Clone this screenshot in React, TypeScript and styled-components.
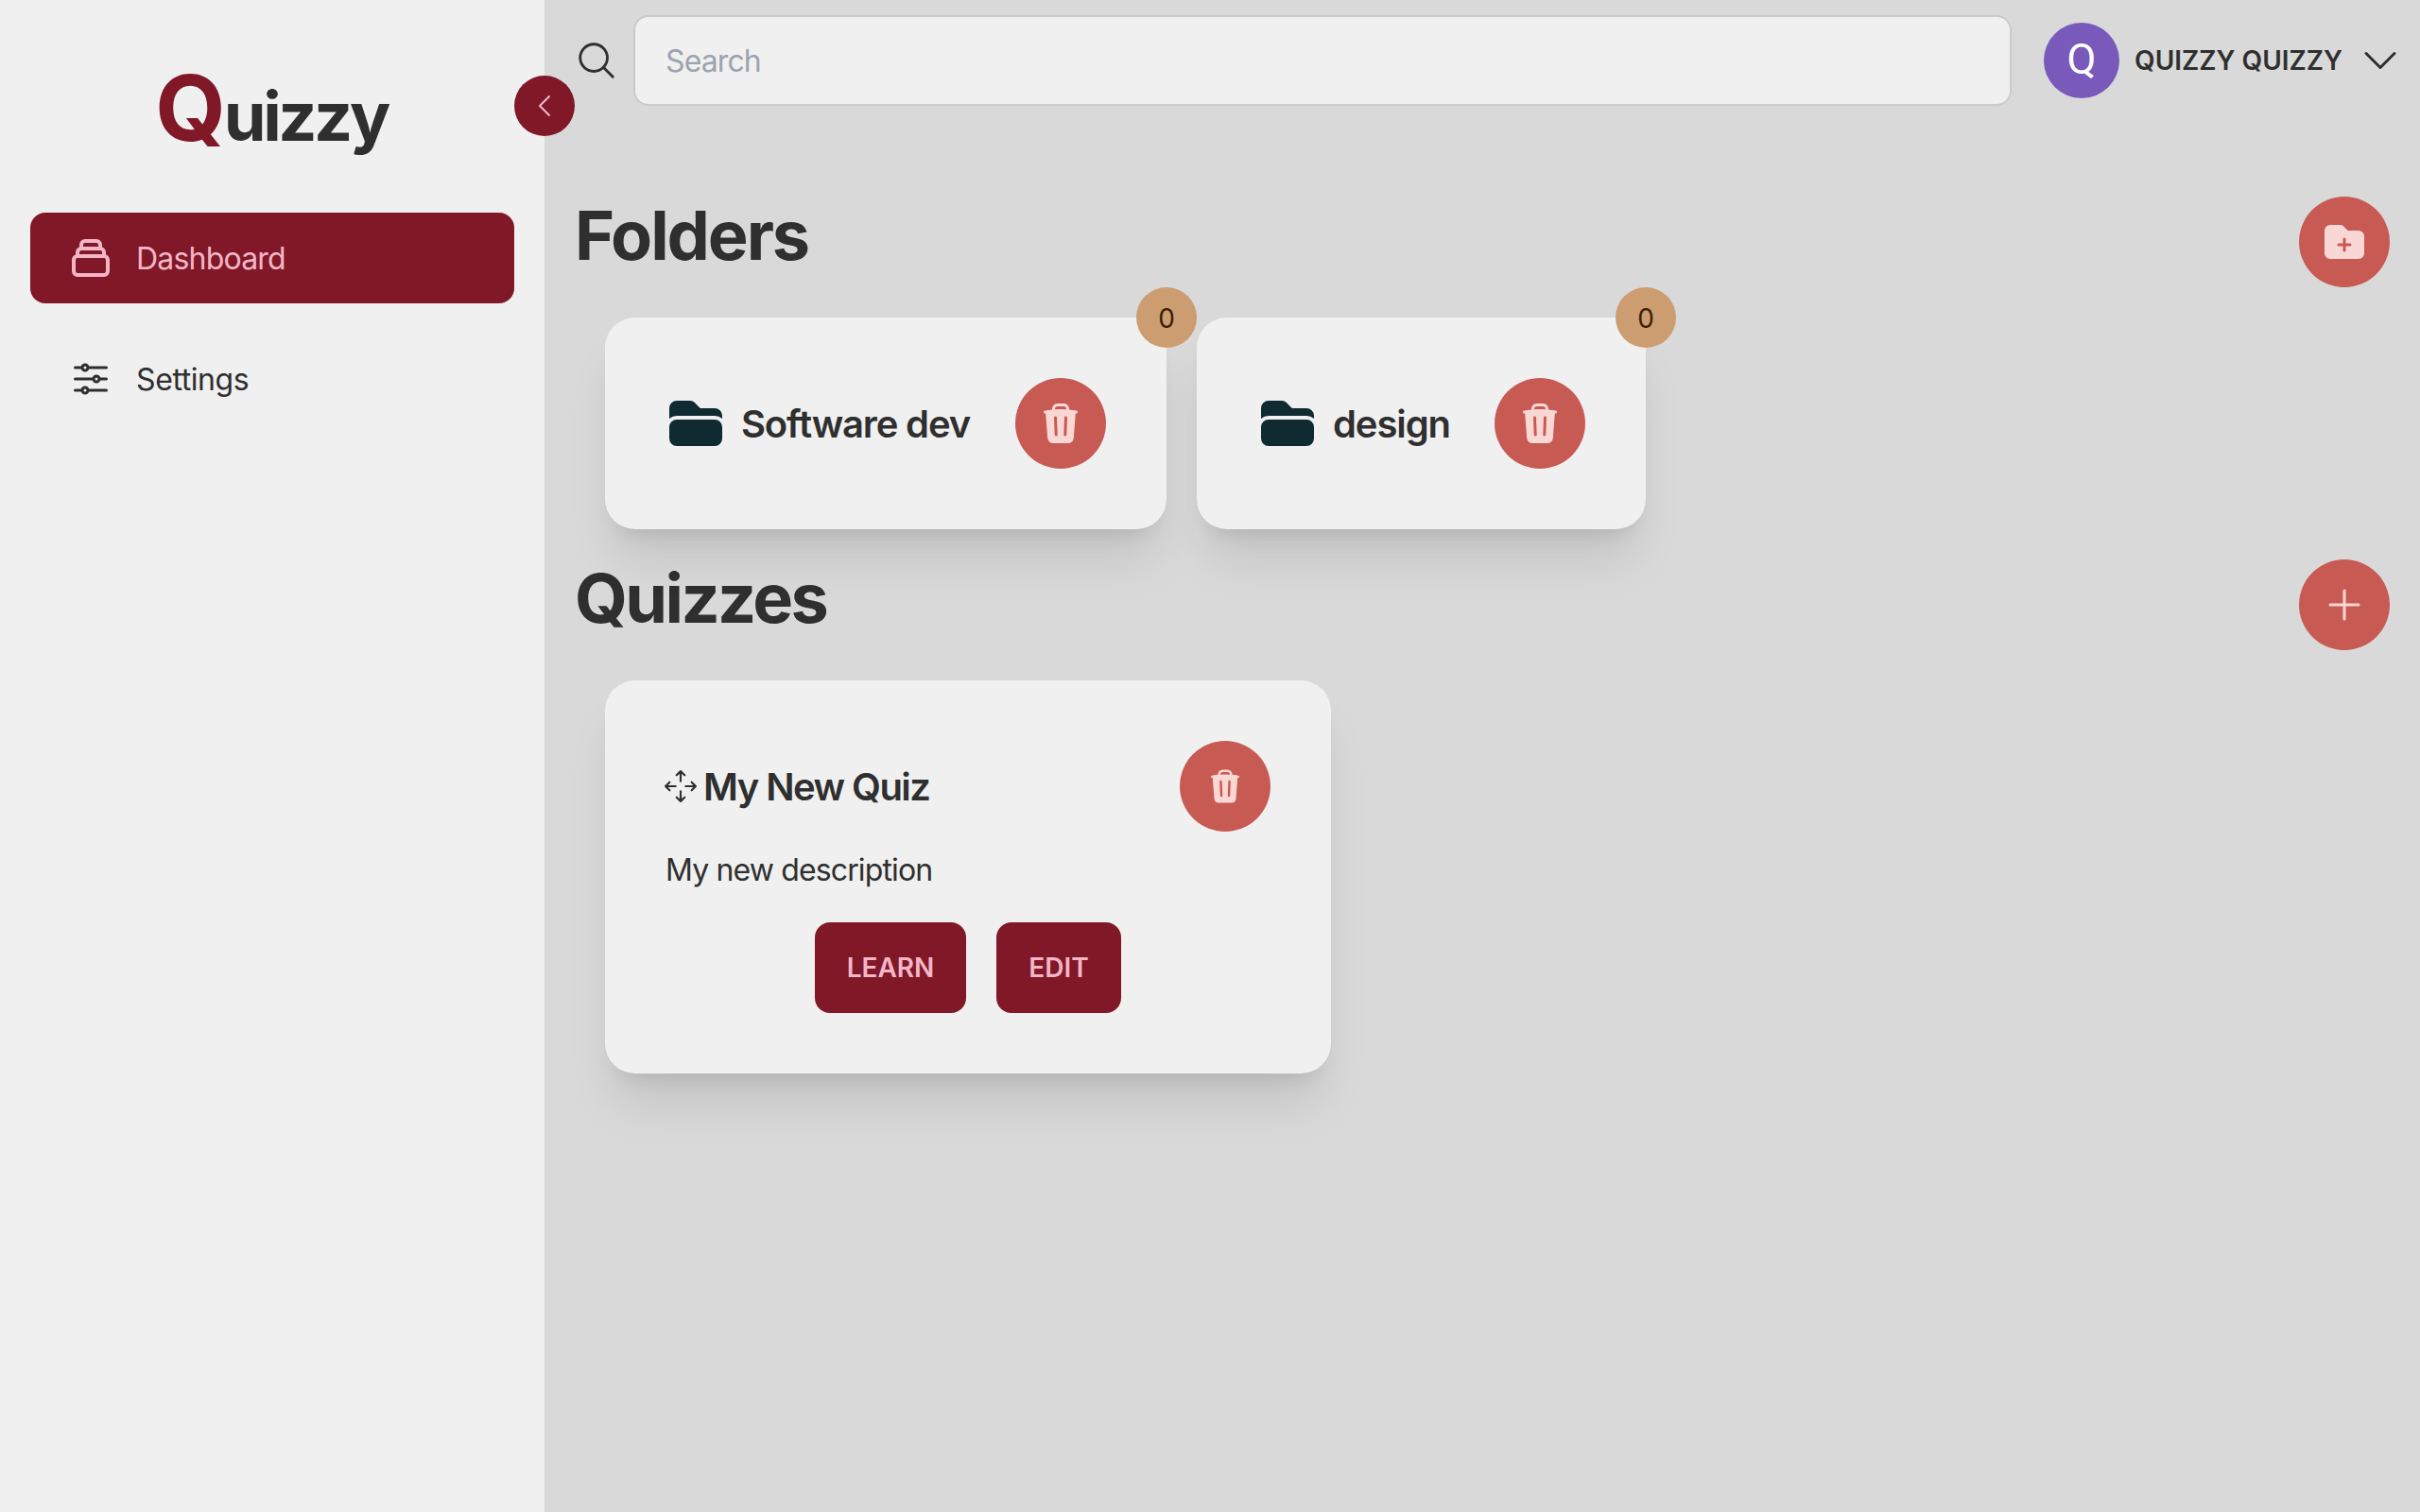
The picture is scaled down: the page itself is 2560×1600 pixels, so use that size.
import React from "react";
import styled, { createGlobalStyle } from "styled-components";
import {
  HiOutlineAdjustmentsHorizontal,
  HiOutlineMagnifyingGlass,
  HiOutlineChevronDown,
  HiOutlineChevronLeft,
  HiOutlinePlus,
  HiFolder,
  HiFolderPlus,
  HiTrash,
} from "react-icons/hi2";
import { HiOutlineCollection } from "react-icons/hi";
import { BsArrowsMove } from "react-icons/bs";

const color = {
  page: "#d9d9d9",
  panel: "#f0f0f0",
  ink: "#2f2f2f",
  wine: "#801828",
  pink: "#f4b6c7",
  red: "#c85a54",
  blush: "#f9d7d4",
  sand: "#cc9d70",
  teal: "#0f2a31",
};

const GlobalStyle = createGlobalStyle`
  *, *::before, *::after { box-sizing: border-box; }
  body {
    margin: 0;
    background: ${color.page};
    color: ${color.ink};
    font-family: Inter, "Liberation Sans", sans-serif;
    font-size: 32px;
    line-height: 48px;
  }
  button, input { font: inherit; color: inherit; }
  svg { display: block; flex: none; }
`;

const Shell = styled.div`
  display: flex;
  width: 100%;
  height: 100vh;
  min-height: 1600px;
  overflow: hidden;
`;

const Sidebar = styled.aside`
  position: relative;
  flex: none;
  width: 576px;
  padding: 58px 32px 0;
  background: ${color.panel};
`;

const Logo = styled.h1`
  margin: 0 0 55px;
  height: 112px;
  padding-right: 2px;
  line-height: 112px;
  text-align: center;
  font-size: 72px;
  font-weight: 700;
  letter-spacing: -3.4px;
  white-space: nowrap;
`;

const LogoInitial = styled.span`
  font-size: 96px;
  letter-spacing: -2px;
  color: ${color.wine};
`;

const CollapseButton = styled.button`
  position: absolute;
  top: 80px;
  right: -32px;
  z-index: 2;
  display: grid;
  place-items: center;
  width: 64px;
  height: 64px;
  padding: 0;
  border: 0;
  border-radius: 50%;
  background: ${color.wine};
  color: ${color.pink};
`;

const Nav = styled.nav`
  display: flex;
  flex-direction: column;
  gap: 32px;
`;

const NavItem = styled.a<{ $active?: boolean }>`
  display: flex;
  align-items: center;
  gap: 24px;
  height: 96px;
  padding: 0 40px;
  border-radius: 16px;
  background: ${(p) => (p.$active ? color.wine : "transparent")};
  color: ${(p) => (p.$active ? color.pink : color.ink)};
`;

const NavLabel = styled.span<{ $tracking: number }>`
  padding-top: 2px;
  letter-spacing: ${(p) => p.$tracking}px;
`;

const Main = styled.main`
  flex: 1;
  min-width: 0;
`;

const Header = styled.header`
  display: flex;
  align-items: center;
  height: 128px;
  padding: 0 18px 0 32px;
`;

const SearchInput = styled.input`
  flex: 1;
  min-width: 0;
  height: 96px;
  margin: 0 34px 0 16px;
  padding: 1px 32px 0;
  border: 2px solid #cacaca;
  border-radius: 16px;
  background: ${color.panel};
  letter-spacing: -0.9px;
  outline: none;
  &::placeholder { color: #9ca3af; opacity: 1; }
`;

const Profile = styled.button`
  display: flex;
  align-items: center;
  gap: 16px;
  padding: 0;
  border: 0;
  background: none;
  font-size: 28px;
  font-weight: 600;
`;

const Avatar = styled.span`
  display: grid;
  place-items: center;
  width: 80px;
  height: 80px;
  padding-bottom: 2px;
  border-radius: 50%;
  background: #7959ba;
  color: #fff;
  font-family: Roboto, sans-serif;
  font-size: 45px;
  font-weight: 400;
`;

const ProfileName = styled.span`
  width: 220px;
  text-align: left;
  white-space: nowrap;
`;

const Content = styled.div`
  padding: 80px 32px 0;
`;

const Section = styled.section`
  margin-bottom: 32px;
`;

const SectionHead = styled.div`
  display: flex;
  justify-content: space-between;
  align-items: flex-start;
  height: 96px;
`;

const SectionTitle = styled.h2<{ $tracking: number }>`
  margin: 0;
  padding-top: 1px;
  font-size: 72px;
  line-height: 80px;
  font-weight: 700;
  letter-spacing: ${(p) => p.$tracking}px;
`;

const RoundButton = styled.button`
  display: grid;
  place-items: center;
  flex: none;
  width: 96px;
  height: 96px;
  padding: 0;
  border: 0;
  border-radius: 50%;
  background: ${color.red};
  color: ${color.blush};
`;

const CardRow = styled.div`
  display: flex;
  gap: 32px;
  padding: 32px 32px 0;
`;

const Card = styled.article<{ $width: number }>`
  position: relative;
  width: ${(p) => p.$width}px;
  padding: 64px;
  border-radius: 32px;
  background: ${color.panel};
  box-shadow: 0 40px 50px -10px rgba(0, 0, 0, 0.1), 0 16px 20px -12px rgba(0, 0, 0, 0.1);
`;

const CardHead = styled.div`
  display: flex;
  align-items: center;
  justify-content: space-between;
  height: 96px;
`;

const CardLabel = styled.div<{ $gap: number }>`
  display: flex;
  align-items: center;
  gap: ${(p) => p.$gap}px;
`;

const CardTitle = styled.h3<{ $tracking: number }>`
  margin: 0;
  padding-top: 1px;
  font-size: 40px;
  font-weight: 600;
  letter-spacing: ${(p) => p.$tracking}px;
  white-space: nowrap;
`;

const MoveIcon = styled(BsArrowsMove)`
  margin-left: -1px;
`;

const Badge = styled.span`
  position: absolute;
  top: -32px;
  right: -32px;
  z-index: 1;
  display: grid;
  place-items: center;
  width: 64px;
  height: 64px;
  padding-top: 1px;
  border-radius: 50%;
  background: ${color.sand};
  color: #3b1f05;
  font-size: 28px;
`;

const Description = styled.p`
  margin: 17px 0 31px;
  letter-spacing: -0.86px;
`;

const Actions = styled.div`
  display: flex;
  justify-content: center;
  gap: 32px;
`;

const ActionButton = styled.button<{ $width: number }>`
  width: ${(p) => p.$width}px;
  height: 96px;
  padding: 0;
  border: 0;
  border-radius: 16px;
  background: ${color.wine};
  color: ${color.pink};
  font-size: 28px;
  font-weight: 600;
`;

const folders = [
  { name: "Software dev", count: 0, width: 594, tracking: -1.15 },
  { name: "design", count: 0, width: 475, tracking: -1.1 },
];

export default function App() {
  return (
    <>
      <GlobalStyle />
      <Shell>
        <Sidebar>
          <Logo>
            <LogoInitial>Q</LogoInitial>uizzy
          </Logo>
          <Nav>
            <NavItem $active>
              <HiOutlineCollection size={48} />
              <NavLabel $tracking={-0.8}>Dashboard</NavLabel>
            </NavItem>
            <NavItem>
              <HiOutlineAdjustmentsHorizontal size={48} />
              <NavLabel $tracking={-0.4}>Settings</NavLabel>
            </NavItem>
          </Nav>
          <CollapseButton aria-label="Collapse sidebar">
            <HiOutlineChevronLeft size={32} />
          </CollapseButton>
        </Sidebar>
        <Main>
          <Header>
            <HiOutlineMagnifyingGlass size={46} />
            <SearchInput placeholder="Search" />
            <Profile>
              <Avatar>Q</Avatar>
              <ProfileName>QUIZZY QUIZZY</ProfileName>
              <HiOutlineChevronDown size={48} />
            </Profile>
          </Header>
          <Content>
            <Section>
              <SectionHead>
                <SectionTitle $tracking={-2.1}>Folders</SectionTitle>
                <RoundButton aria-label="Add folder">
                  <HiFolderPlus size={48} />
                </RoundButton>
              </SectionHead>
              <CardRow>
                {folders.map((f) => (
                  <Card key={f.name} $width={f.width}>
                    <CardHead>
                      <CardLabel $gap={16}>
                        <HiFolder size={64} color={color.teal} />
                        <CardTitle $tracking={f.tracking}>{f.name}</CardTitle>
                      </CardLabel>
                      <RoundButton aria-label="Delete folder">
                        <HiTrash size={48} />
                      </RoundButton>
                    </CardHead>
                    <Badge>{f.count}</Badge>
                  </Card>
                ))}
              </CardRow>
            </Section>
            <Section>
              <SectionHead>
                <SectionTitle $tracking={-2.6}>Quizzes</SectionTitle>
                <RoundButton aria-label="Add quiz">
                  <HiOutlinePlus size={48} />
                </RoundButton>
              </SectionHead>
              <CardRow>
                <Card $width={768}>
                  <CardHead>
                    <CardLabel $gap={7}>
                      <MoveIcon size={34} />
                      <CardTitle $tracking={-1.55}>My New Quiz</CardTitle>
                    </CardLabel>
                    <RoundButton aria-label="Delete quiz">
                      <HiTrash size={40} />
                    </RoundButton>
                  </CardHead>
                  <Description>My new description</Description>
                  <Actions>
                    <ActionButton $width={160}>LEARN</ActionButton>
                    <ActionButton $width={132}>EDIT</ActionButton>
                  </Actions>
                </Card>
              </CardRow>
            </Section>
          </Content>
        </Main>
      </Shell>
    </>
  );
}
